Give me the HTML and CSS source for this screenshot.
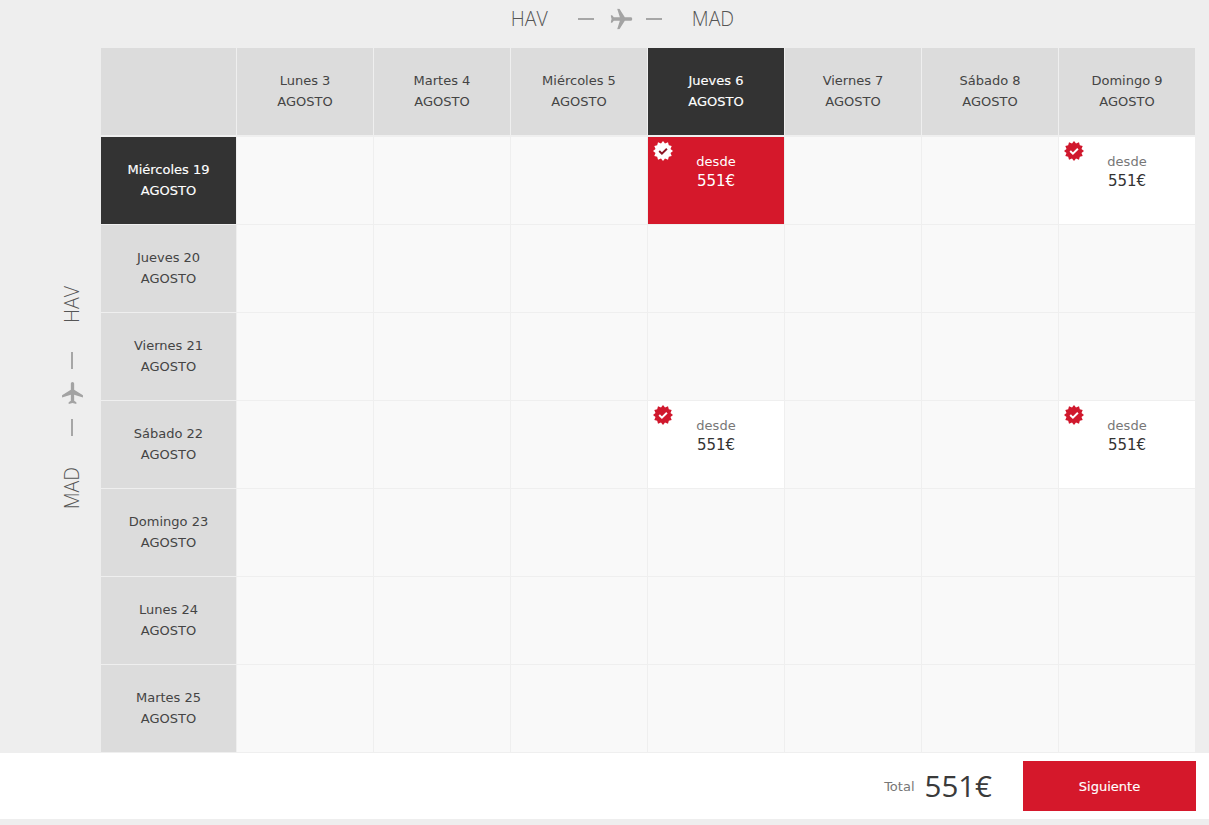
FILE: index.html
```html
<!DOCTYPE html>
<html lang="es">
<head>
<meta charset="utf-8">
<title>Calendario</title>
<link rel="stylesheet" href="styles.css">
</head>
<body>
<svg class="defs" width="0" height="0" aria-hidden="true">
  <symbol id="plane" viewBox="2 2 19 20"><path d="M21 16v-2l-8-5V3.5c0-.83-.67-1.5-1.5-1.5S10 2.67 10 3.5V9l-8 5v2l8-2.5V19l-2 1.5V22l3.5-1 3.5 1v-1.5L13 19v-5.5l8 2.5z"/></symbol>
  <symbol id="badge" viewBox="0 0 20 20"><polygon points="10,0 12,2.5 15,1.3 15.8,4.2 18.7,5 17.5,8 20,10 17.5,12 18.7,15 15.8,15.8 15,18.7 12,17.5 10,20 8,17.5 5,18.7 4.2,15.8 1.3,15 2.5,12 0,10 2.5,8 1.3,5 4.2,4.2 5,1.3 8,2.5"/><path class="tick" d="M6.2 10l2.7 2.6 5-4.8"/></symbol>
</svg>
<header class="route">
  <span class="code">HAV</span>
  <span class="dash"></span>
  <svg class="plane plane-right"><use href="#plane"/></svg>
  <span class="dash dash-after"></span>
  <span class="code">MAD</span>
</header>
<main class="board">
  <aside class="axis">
    <span class="code code-v">HAV</span>
    <span class="dash-v"></span>
    <svg class="plane"><use href="#plane"/></svg>
    <span class="dash-v"></span>
    <span class="code code-v">MAD</span>
  </aside>
  <div class="grid">
    <div class="head"></div>
    <div class="head">Lunes 3<br>AGOSTO</div>
    <div class="head">Martes 4<br>AGOSTO</div>
    <div class="head">Miércoles 5<br>AGOSTO</div>
    <div class="head active">Jueves 6<br>AGOSTO</div>
    <div class="head">Viernes 7<br>AGOSTO</div>
    <div class="head">Sábado 8<br>AGOSTO</div>
    <div class="head">Domingo 9<br>AGOSTO</div>

    <div class="side active">Miércoles 19<br>AGOSTO</div>
    <div class="cell"></div><div class="cell"></div><div class="cell"></div>
    <div class="cell fare selected"><svg class="badge"><use href="#badge"/></svg><span class="from">desde</span><span class="price">551€</span></div>
    <div class="cell"></div><div class="cell"></div>
    <div class="cell fare"><svg class="badge"><use href="#badge"/></svg><span class="from">desde</span><span class="price">551€</span></div>

    <div class="side">Jueves 20<br>AGOSTO</div>
    <div class="cell"></div><div class="cell"></div><div class="cell"></div><div class="cell"></div><div class="cell"></div><div class="cell"></div><div class="cell"></div>

    <div class="side">Viernes 21<br>AGOSTO</div>
    <div class="cell"></div><div class="cell"></div><div class="cell"></div><div class="cell"></div><div class="cell"></div><div class="cell"></div><div class="cell"></div>

    <div class="side">Sábado 22<br>AGOSTO</div>
    <div class="cell"></div><div class="cell"></div><div class="cell"></div>
    <div class="cell fare"><svg class="badge"><use href="#badge"/></svg><span class="from">desde</span><span class="price">551€</span></div>
    <div class="cell"></div><div class="cell"></div>
    <div class="cell fare"><svg class="badge"><use href="#badge"/></svg><span class="from">desde</span><span class="price">551€</span></div>

    <div class="side">Domingo 23<br>AGOSTO</div>
    <div class="cell"></div><div class="cell"></div><div class="cell"></div><div class="cell"></div><div class="cell"></div><div class="cell"></div><div class="cell"></div>

    <div class="side">Lunes 24<br>AGOSTO</div>
    <div class="cell"></div><div class="cell"></div><div class="cell"></div><div class="cell"></div><div class="cell"></div><div class="cell"></div><div class="cell"></div>

    <div class="side">Martes 25<br>AGOSTO</div>
    <div class="cell"></div><div class="cell"></div><div class="cell"></div><div class="cell"></div><div class="cell"></div><div class="cell"></div><div class="cell"></div>
  </div>
</main>
<footer class="footer">
  <span class="total-label">Total</span>
  <span class="total">551€</span>
  <button class="next" type="button">Siguiente</button>
</footer>
</body>
</html>
```
FILE: styles.css
```css
* { box-sizing: border-box; }
html, body { margin: 0; padding: 0; }
body {
  background: #eeeeee;
  color: #444444;
  font-family: "DejaVu Sans", Verdana, sans-serif;
  font-size: 13px;
  height: 825px;
  overflow: hidden;
}
.defs { position: absolute; }

.route {
  height: 48px;
  padding: 0 0 10px 36px;
  display: flex;
  align-items: center;
  justify-content: center;
}
.code {
  font-family: "Open Sans", sans-serif;
  font-weight: 300;
  font-size: 19.5px;
  color: #555555;
  line-height: 1;
}
.dash { width: 16px; height: 2px; background: #a6a6a6; margin: 0 17px 0 30px; }
.dash-after { margin: 0 30px 0 14px; }
.plane { width: 21px; height: 22px; fill: #a3a3a3; display: block; }
.plane-right { transform: rotate(90deg); }

.board { display: flex; }
.axis {
  width: 101px;
  padding: 238px 0 0 43px;
  display: flex;
  flex-direction: column;
  align-items: center;
}
.code-v { writing-mode: vertical-rl; transform: rotate(180deg); }
.dash-v { width: 2px; height: 17px; background: #a6a6a6; margin: 29px 0 13px; }
.plane + .dash-v { margin: 15px 0 31px; }

.grid {
  width: 1094px;
  display: grid;
  grid-template-columns: 135px repeat(7, 136px);
  grid-template-rows: 88px repeat(7, 87px);
  gap: 1px;
  padding-bottom: 1px;
  background: #efefef;
}
.head, .side {
  background: #dcdcdc;
  text-align: center;
  line-height: 21px;
  padding-top: 22px;
}
.head { margin-bottom: 1px; }
.active { background: #333333; color: #ffffff; -webkit-text-stroke: 0.15px #ffffff; }
.cell { background: #f9f9f9; }
.fare {
  background: #ffffff;
  position: relative;
  display: flex;
  flex-direction: column;
  align-items: center;
  padding-top: 16px;
}
.from { font-size: 13px; line-height: 17px; color: #777777; }
.price { font-size: 15px; line-height: 21px; color: #333333; padding-top: 1px; }
.badge {
  --tick: #ffffff;
  position: absolute;
  left: 5px;
  top: 4px;
  width: 20px;
  height: 20px;
  fill: #d0182d;
}
.tick { fill: none; stroke: var(--tick); stroke-width: 2; }
.selected { background: #d5182b; }
.selected .from, .selected .price { color: #ffffff; }
.selected .badge { --tick: #8c1525; fill: #ffffff; }

.footer {
  height: 66px;
  background: #ffffff;
  display: flex;
  align-items: center;
  justify-content: flex-end;
  padding-right: 13px;
}
.total-label { font-size: 13px; color: #777777; margin-right: 10px; }
.total {
  font-family: "Open Sans", sans-serif;
  font-size: 29.5px;
  line-height: 1;
  color: #3a3a3a;
  margin: 0 31px 0 0;
}
.next {
  width: 173px;
  height: 50px;
  border: 0;
  background: #d5182b;
  color: #ffffff;
  font: 13px "DejaVu Sans", Verdana, sans-serif;
  -webkit-text-stroke: 0.15px #ffffff;
}
```
